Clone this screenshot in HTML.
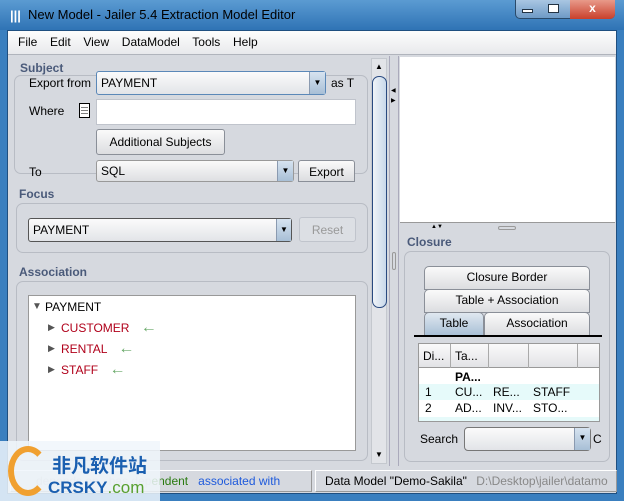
<!DOCTYPE html>
<html><head><meta charset="utf-8"><style>
*{box-sizing:border-box;margin:0;padding:0}
body{width:624px;height:501px;overflow:hidden;font-family:"Liberation Sans",sans-serif;font-size:12px;background:#3a7fbf;position:relative;color:#000}
.a{position:absolute}
.grp{position:absolute;border:1px solid #b8bcc4;border-radius:7px;background:#d6d9df}
.lbl{position:absolute;color:#4a5a7a;font-weight:bold;font-size:12px}
.cb{position:absolute;border:1px solid #7a8aa0;border-radius:3px;background:linear-gradient(#fbfbfb,#e2e4e8);padding-left:4px;line-height:20px}
.cb .ar{position:absolute;right:0;top:0;bottom:0;width:16px;background:linear-gradient(#d6e3f0,#a8bfd6);border-left:1px solid #8a9ab0;font-size:8px;text-align:center}
.btn{position:absolute;border:1px solid #8a8f98;border-radius:3px;background:linear-gradient(#fafafa,#dcdde0);text-align:center}
.tab{position:absolute;border:1px solid #8a8f98;border-radius:5px 5px 0 0;background:linear-gradient(#fafafa,#dcdde0);text-align:center;line-height:21px}
.arw{color:#6aaa6a;font-size:16px;margin-left:8px;line-height:12px}
</style></head><body>
<div class="a" style="left:0;top:0;width:624px;height:30px;background:linear-gradient(#5b9bd2,#2f73b5)"></div>
<div class="a" style="left:10px;top:8px;color:#fff;font-size:13px;font-weight:bold">|||</div>
<div class="a" style="left:28px;top:7px;font-size:13px;color:#000">New Model - Jailer 5.4 Extraction Model Editor</div>
<div class="a" style="left:515px;top:0;width:100px;height:19px;border:1px solid #2a4a6a;border-top:0;border-radius:0 0 5px 5px;background:linear-gradient(#a9c6e2,#6e9ac6)"></div>
<div class="a" style="left:570px;top:0;width:45px;height:19px;border-radius:0 0 5px 0;background:linear-gradient(#e89a8a,#c9402c);color:#fff;text-align:center;font-weight:bold;line-height:17px">x</div>
<div class="a" style="left:522px;top:9px;width:11px;height:4px;border:1px solid #234;background:#fff"></div>
<div class="a" style="left:548px;top:4px;width:11px;height:9px;border:1px solid #234;background:#fff"></div>
<div class="a" style="left:7px;top:30px;width:610px;height:464px;background:#d6d9df;border:1px solid #1f4f80"></div>
<div class="a" style="left:8px;top:31px;width:608px;height:24px;background:linear-gradient(#fdfdfd,#e8e9ec);border-bottom:1px solid #b0b4bc"></div>
<div class="a" style="left:18px;top:35px;font-size:12px;word-spacing:3px">File&nbsp; Edit&nbsp; View&nbsp; DataModel&nbsp; Tools&nbsp; Help</div>
<div class="lbl" style="left:20px;top:61px">Subject</div>
<div class="grp" style="left:14px;top:75px;width:354px;height:99px;background:transparent"></div>
<div class="a" style="left:29px;top:76px">Export from</div>
<div class="cb" style="left:96px;top:71px;width:230px;height:24px;line-height:22px;border-color:#5b88b8">PAYMENT<div class="ar">▼</div></div>
<div class="a" style="left:331px;top:76px">as T</div>
<div class="a" style="left:29px;top:104px">Where</div>
<div class="a" style="left:79px;top:103px;width:11px;height:15px;border:1px solid #000;background:#fff;font-size:7px;line-height:3px;padding:2px 1px">—<br>—<br>—</div>
<div class="a" style="left:96px;top:99px;width:260px;height:26px;background:#fff;border:1px solid #c0c4cc"></div>
<div class="btn" style="left:96px;top:129px;width:129px;height:26px;line-height:24px">Additional Subjects</div>
<div class="a" style="left:29px;top:165px">To</div>
<div class="cb" style="left:96px;top:160px;width:198px;height:22px;background:linear-gradient(#fafafa,#dedfe2);border-color:#999">SQL<div class="ar">▼</div></div>
<div class="btn" style="left:298px;top:160px;width:57px;height:22px;line-height:22px;border-radius:3px 3px 0 0">Export</div>
<div class="lbl" style="left:19px;top:187px">Focus</div>
<div class="grp" style="left:16px;top:203px;width:352px;height:50px"></div>
<div class="cb" style="left:28px;top:218px;width:264px;height:24px;line-height:22px;border-color:#555">PAYMENT<div class="ar" style="width:15px">▼</div></div>
<div class="btn" style="left:299px;top:217px;width:57px;height:25px;line-height:24px;color:#999;border-color:#c0c4cc;background:#dcdfe4">Reset</div>
<div class="lbl" style="left:19px;top:265px">Association</div>
<div class="grp" style="left:16px;top:281px;width:352px;height:180px"></div>
<div class="a" style="left:28px;top:295px;width:328px;height:156px;background:#fff;border:1px solid #999"></div>
<div class="a" style="left:32px;top:301px;font-size:10px;color:#555">▼</div>
<div class="a" style="left:45px;top:300px">PAYMENT</div>
<div class="a" style="left:48px;top:322px;font-size:9px;color:#555">▶</div><div class="a" style="left:61px;top:321px;color:#b0001a">CUSTOMER <span class="arw">←</span></div>
<div class="a" style="left:48px;top:343px;font-size:9px;color:#555">▶</div><div class="a" style="left:61px;top:342px;color:#b0001a">RENTAL <span class="arw">←</span></div>
<div class="a" style="left:48px;top:364px;font-size:9px;color:#555">▶</div><div class="a" style="left:61px;top:363px;color:#b0001a">STAFF <span class="arw">←</span></div>
<div class="a" style="left:371px;top:58px;width:16px;height:406px;background:#e2e4e8;border:1px solid #c4c8ce"></div>
<div class="a" style="left:375px;top:62px;font-size:8px">▲</div>
<div class="a" style="left:372px;top:76px;width:15px;height:232px;border:1px solid #2a4a80;border-radius:7px;background:linear-gradient(90deg,#f0f4f8,#c8d8ea)"></div>
<div class="a" style="left:375px;top:450px;font-size:8px">▼</div>
<div class="a" style="left:389px;top:56px;width:1px;height:410px;background:#aab"></div>
<div class="a" style="left:398px;top:56px;width:1px;height:410px;background:#aab"></div>
<div class="a" style="left:391px;top:86px;font-size:6px;line-height:10px">◀<br>▶</div>
<div class="a" style="left:392px;top:252px;width:4px;height:18px;border:1px solid #999;border-radius:2px"></div>
<div class="a" style="left:400px;top:57px;width:215px;height:166px;background:#fff;border-bottom:1px solid #999"></div>
<div class="a" style="left:431px;top:224px;font-size:6px">▲▼</div>
<div class="a" style="left:498px;top:226px;width:18px;height:4px;border:1px solid #999;border-radius:2px"></div>
<div class="lbl" style="left:407px;top:235px">Closure</div>
<div class="grp" style="left:404px;top:251px;width:206px;height:211px"></div>
<div class="tab" style="left:424px;top:266px;width:166px;height:24px">Closure Border</div>
<div class="tab" style="left:424px;top:289px;width:166px;height:24px">Table + Association</div>
<div class="tab" style="left:424px;top:312px;width:60px;height:24px;background:linear-gradient(#e0e8f0,#a9c0d6)">Table</div>
<div class="tab" style="left:484px;top:312px;width:106px;height:24px">Association</div>
<div class="a" style="left:414px;top:335px;width:188px;height:2px;background:#000"></div>
<div class="a" style="left:418px;top:343px;width:182px;height:79px;background:#fff;border:1px solid #999;overflow:hidden">
<div style="height:24px;background:linear-gradient(#fafafa,#e2e3e6);border-bottom:1px solid #999;position:relative">
<span class="a" style="left:4px;top:5px">Di...</span><span class="a" style="left:31px;top:0;height:24px;border-left:1px solid #aaa;padding:5px 4px">Ta...</span>
<span class="a" style="left:69px;top:0;height:24px;border-left:1px solid #aaa"></span><span class="a" style="left:109px;top:0;height:24px;border-left:1px solid #aaa"></span><span class="a" style="left:158px;top:0;height:24px;border-left:1px solid #aaa"></span></div>
<div class="a" style="left:36px;top:26px;font-weight:bold">PA...</div>
<div class="a" style="left:0;top:40px;width:182px;height:16px;background:#e6fafa"></div>
<div class="a" style="left:6px;top:41px">1</div><div class="a" style="left:36px;top:41px">CU...</div><div class="a" style="left:74px;top:41px">RE...</div><div class="a" style="left:114px;top:41px">STAFF</div>
<div class="a" style="left:6px;top:57px">2</div><div class="a" style="left:36px;top:57px">AD...</div><div class="a" style="left:74px;top:57px">INV...</div><div class="a" style="left:114px;top:57px">STO...</div>
<div class="a" style="left:0;top:73px;width:182px;height:6px;background:#e6fafa"></div>
</div>
<div class="a" style="left:420px;top:432px">Search</div>
<div class="cb" style="left:464px;top:427px;width:127px;height:24px;border-color:#777;border-radius:4px"><div class="ar">▼</div></div>
<div class="a" style="left:593px;top:432px">C</div>
<div class="a" style="left:8px;top:469px;width:608px;height:24px;background:#d6d9df"></div>
<div class="a" style="left:10px;top:470px;width:302px;height:22px;border:1px solid #fff;border-right-color:#999;border-bottom-color:#999"></div>
<div class="a" style="left:315px;top:470px;width:302px;height:22px;border:1px solid #fff;border-right-color:#999;border-bottom-color:#999"></div>
<div class="a" style="left:36px;top:474px;color:#bbb">depends on&nbsp;&nbsp; has dep<span style="color:#2a7a10">endent</span>&nbsp;&nbsp; <span style="color:#1e5adc">associated with</span></div>
<div class="a" style="left:325px;top:474px;white-space:nowrap">Data Model "Demo-Sakila" <span style="color:#888;margin-left:6px">D:\Desktop\jailer\datamo</span></div>
<div class="a" style="left:0;top:494px;width:624px;height:7px;background:#3a7fbf"></div>
<div class="a" style="left:0;top:441px;width:160px;height:60px;background:rgba(240,246,252,0.85)"></div>
<div class="a" style="left:8px;top:446px;width:40px;height:50px;border:6px solid #f0a030;border-right-color:transparent;border-radius:50%"></div>
<div class="a" style="left:52px;top:451px;font-family:'Noto Sans CJK SC',sans-serif;font-weight:bold;font-size:19px;color:#1a5fb0">非凡软件站</div>
<div class="a" style="left:48px;top:478px;font-weight:bold;font-size:17px;color:#1a5fb0">CRSKY<span style="color:#58a030;font-weight:normal">.com</span></div>
</body></html>
